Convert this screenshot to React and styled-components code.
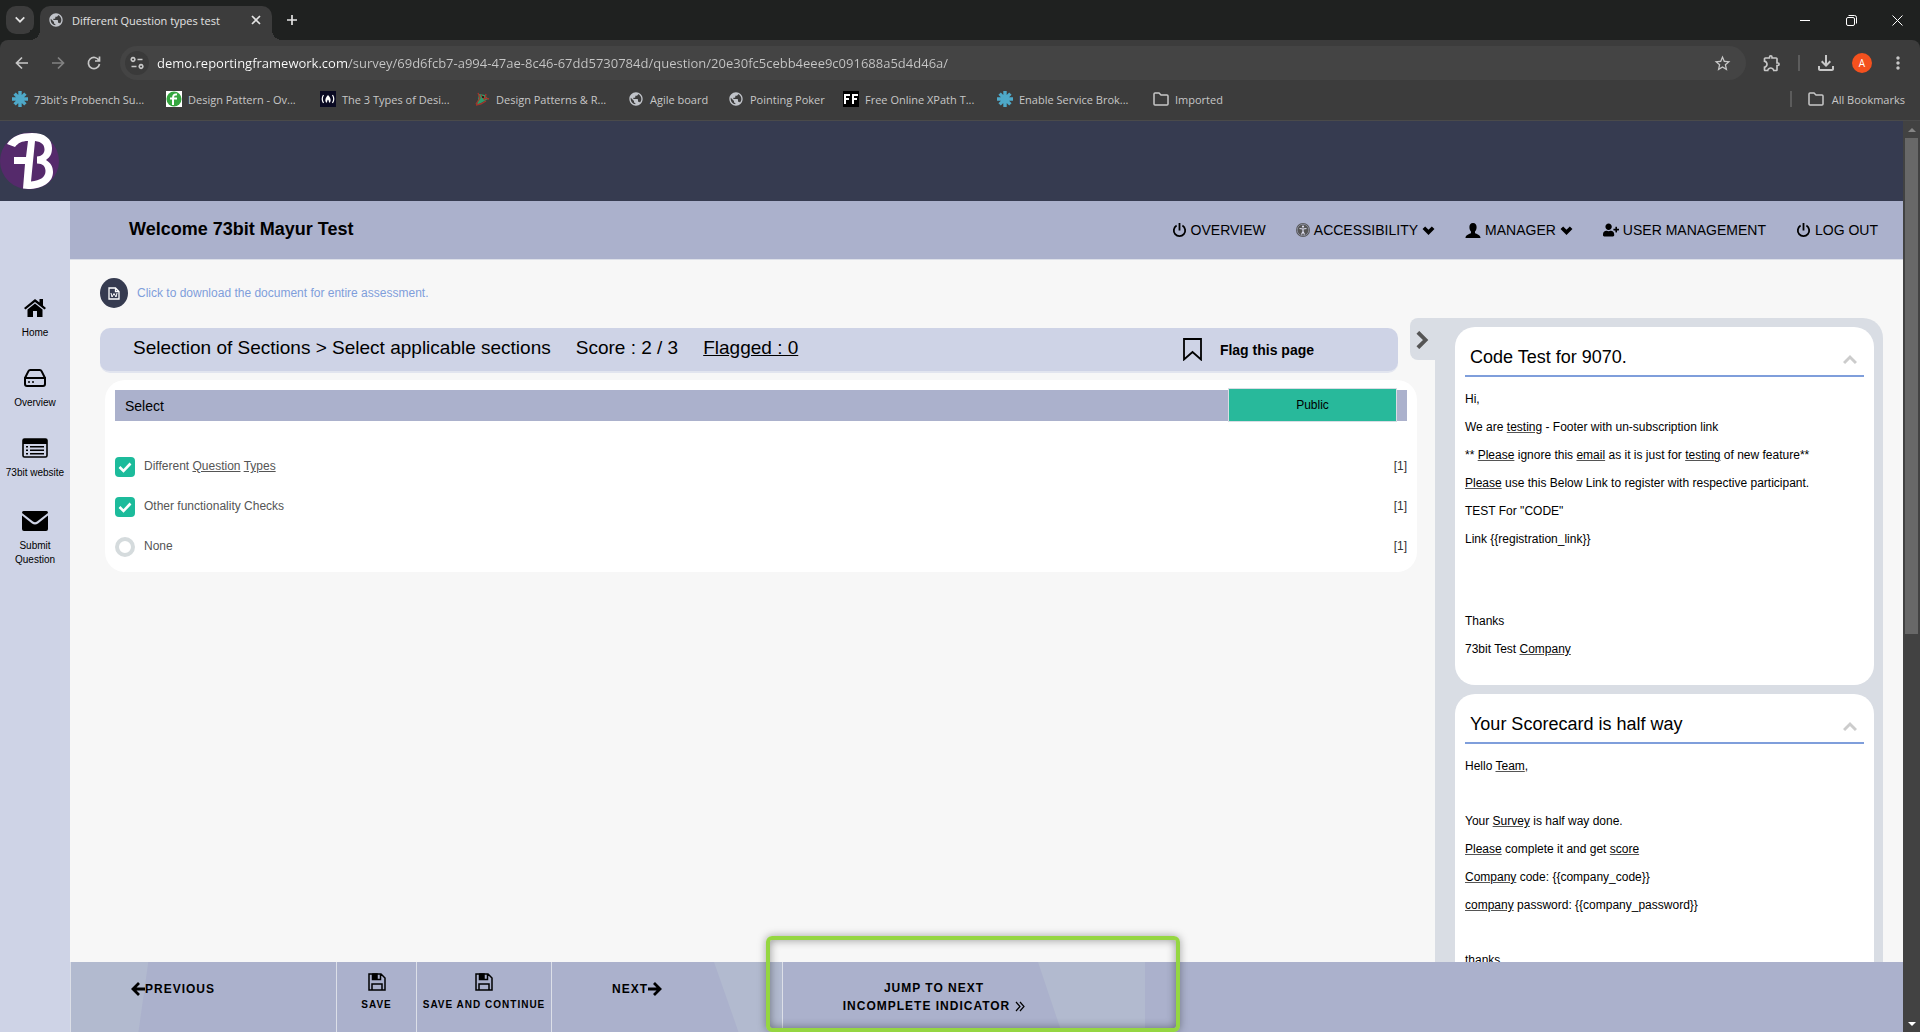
import React, { useState } from 'react'
import styled, { createGlobalStyle, css } from 'styled-components'
import { FaUserPlus } from 'react-icons/fa'
import { FiHardDrive } from 'react-icons/fi'
import { MdOutlineFileDownload, MdStarOutline, MdOutlineExtension, MdMoreVert, MdPublic } from 'react-icons/md'

const GlobalStyle = createGlobalStyle`
  * {
    box-sizing: border-box;
  }
  body {
    margin: 0;
    font-family: "Liberation Sans", Arial, sans-serif;
    font-size: 12px;
    color: #000;
    background: #f7f7f7;
  }
  button, input {
    font-family: inherit;
    color: inherit;
  }
  button {
    padding: 0;
    border: 0;
    background: none;
    cursor: pointer;
  }
  a {
    color: inherit;
    text-decoration: none;
  }
  svg {
    flex: none;
    display: block;
  }
`

const Window = styled.div`
  display: flex;
  flex-direction: column;
  height: 100vh;
  overflow: hidden;
`

/* browser */

const Browser = styled.div`
  flex: none;
  background: #1f2120;
  color: #e3e3e3;
  font-family: "Open Sans", "Noto Sans", sans-serif;
  font-size: 11px;
`

const TabStrip = styled.div`
  display: flex;
  align-items: flex-end;
  height: 40px;
  padding-left: 6px;
`

const TabSearch = styled.button`
  display: flex;
  align-items: center;
  justify-content: center;
  width: 28px;
  height: 28px;
  margin: 0 6px 6px 0;
  border-radius: 10px;
  background: #3c3c3c;
`

const Tab = styled.div`
  position: relative;
  display: flex;
  align-items: center;
  width: 232px;
  height: 34px;
  padding: 0 8px 6px 8px;
  border-radius: 10px 10px 0 0;
  background: #3c3c3c;
  &::before, &::after {
    content: '';
    position: absolute;
    bottom: 0;
    width: 10px;
    height: 10px;
  }
  &::before {
    left: -10px;
    background: radial-gradient(circle at 0 0, #1f2120 10px, #3c3c3c 10px);
  }
  &::after {
    right: -10px;
    background: radial-gradient(circle at 100% 0, #1f2120 10px, #3c3c3c 10px);
  }
`

const TabTitle = styled.span`
  flex: 1;
  margin-left: 8px;
`

const TabButton = styled.button`
  display: flex;
  align-items: center;
  justify-content: center;
  width: 16px;
  height: 16px;
`

const NewTab = styled(TabButton)`
  width: 28px;
  height: 28px;
  margin: 0 0 6px 6px;
`

const WindowControls = styled.div`
  display: flex;
  margin-left: auto;
`

const WindowButton = styled.button`
  display: flex;
  align-items: center;
  justify-content: center;
  width: 46px;
  height: 40px;
`

const Toolbar = styled.div`
  display: flex;
  align-items: center;
  height: 40px;
  padding: 6px 4px 0;
  border-radius: 8px 8px 0 0;
  background: #3c3c3c;
  color: #c7c7c7;
`

const ToolButton = styled.button`
  display: flex;
  align-items: center;
  justify-content: center;
  width: 36px;
  height: 34px;
  opacity: ${props => props.disabled ? 0.5 : 1};
`

const Omnibox = styled.div`
  flex: 1;
  display: flex;
  align-items: center;
  height: 34px;
  margin: 0 8px;
  padding: 0 6px 0 5px;
  border-radius: 17px;
  background: #444;
`

const SiteInfo = styled.button`
  display: flex;
  align-items: center;
  justify-content: center;
  width: 24px;
  height: 24px;
  border-radius: 50%;
  background: #3a3a3a;
`

/* the host part of the address is brighter than the path */
const Address = styled.input`
  flex: 1;
  min-width: 0;
  height: 24px;
  margin-left: 8px;
  padding: 0;
  border: 0;
  outline: 0;
  font-size: 13px;
  color: transparent;
  background: linear-gradient(90deg, #fff 192px, #c7c7c7 192px);
  background-clip: text;
  -webkit-background-clip: text;
`

const ToolDivider = styled.span`
  width: 2px;
  height: 16px;
  margin: 0 8px;
  background: #5c5c5c;
`

const Avatar = styled.span`
  display: flex;
  align-items: center;
  justify-content: center;
  width: 20px;
  height: 20px;
  border-radius: 50%;
  background: #f4511e;
  color: #fff;
  font-size: 10px;
`

const BookmarkBar = styled.nav`
  display: flex;
  align-items: center;
  height: 41px;
  padding: 0 15px 2px 12px;
  border-bottom: 1px solid #4a4a4a;
  background: #3c3c3c;
  color: #c7c7c7;
`

const Bookmark = styled.a`
  display: flex;
  align-items: center;
  gap: 6px;
  width: ${props => props.$width}px;
  white-space: nowrap;
`

const AllBookmarks = styled.a`
  display: flex;
  align-items: center;
  gap: 8px;
  margin-left: auto;
  &::before {
    content: '';
    width: 2px;
    height: 16px;
    margin-right: 8px;
    background: #5c5c5c;
  }
`

/* page */

const Viewport = styled.div`
  flex: 1;
  display: flex;
  min-height: 0;
`

const Page = styled.div`
  flex: 1;
  display: flex;
  flex-direction: column;
  min-width: 0;
`

const Scrollbar = styled.div`
  display: flex;
  flex-direction: column;
  align-items: center;
  width: 17px;
  background: #424242;
`

const ScrollArrow = styled.span`
  display: flex;
  align-items: center;
  justify-content: center;
  height: 17px;
  color: ${props => props.$dim ? '#858585' : '#fff'};
`

const ScrollThumb = styled.span`
  flex: 113;
  width: 13px;
  background: #686868;
`

const ScrollRest = styled.span`
  flex: 87;
`

const Banner = styled.header`
  flex: none;
  display: flex;
  align-items: center;
  height: 80px;
  background: #363b50;
`

const Body = styled.div`
  flex: 1;
  display: flex;
  min-height: 0;
`

const Sidebar = styled.nav`
  flex: none;
  display: flex;
  flex-direction: column;
  width: 70px;
  padding-top: 95px;
  background: #ced3e6;
`

const SideLink = styled.a`
  display: flex;
  flex-direction: column;
  align-items: center;
  gap: 6px;
  height: ${props => props.$tall ? 73 : 70}px;
  font-size: 10px;
  line-height: 14px;
  text-align: center;
`

const SideIcon = styled.span`
  display: flex;
  align-items: center;
  height: 24px;
`

const Main = styled.main`
  flex: 1;
  display: flex;
  flex-direction: column;
  min-width: 0;
`

const WelcomeBar = styled.div`
  flex: none;
  display: flex;
  align-items: center;
  justify-content: space-between;
  height: 59px;
  padding: 0 25px 0 59px;
  border-bottom: 1px solid #dcdfe8;
  background: #abb1cc;
`

const Welcome = styled.h1`
  margin: 0 0 3px;
  font-size: 18px;
  line-height: 22px;
`

const TopMenu = styled.nav`
  display: flex;
  gap: 30px;
  font-size: 14px;
`

const TopLink = styled.a`
  display: flex;
  align-items: center;
  gap: 4px;
`

const Content = styled.div`
  flex: 1;
  display: flex;
  align-items: flex-start;
  min-height: 0;
  overflow: hidden;
  padding: 0 20px 0 30px;
  background: #f7f7f7;
`

const Survey = styled.section`
  flex: 1;
  min-width: 0;
  padding-top: 18px;
`

const Download = styled.a`
  display: flex;
  align-items: center;
  gap: 9px;
  height: 30px;
  color: #7f9edb;
`

const DownloadBadge = styled.span`
  display: flex;
  align-items: center;
  justify-content: center;
  width: 28px;
  height: 30px;
  border-radius: 50%;
  background: #363b50;
`

const SectionBar = styled.div`
  display: flex;
  align-items: center;
  height: 45px;
  margin: 20px 19px 7px 0;
  padding: 0 84px 0 33px;
  border-bottom: 2px solid #e2e5ef;
  border-radius: 10px;
  background: #ced3e6;
  font-size: 19px;
`

const SectionTitle = styled.h2`
  margin: 0 25px 3px 0;
  font-size: 19px;
  font-weight: normal;
`

const SectionScore = styled.span`
  margin: 0 25px 3px 0;
`

const FlaggedLink = styled.a`
  margin-bottom: 3px;
  text-decoration: underline;
`

const FlagButton = styled.button`
  display: flex;
  align-items: center;
  gap: 18px;
  margin-left: auto;
  font-size: 14px;
  font-weight: bold;
`

const QuestionCard = styled.div`
  margin-left: 5px;
  padding: 10px 10px 5px;
  border-radius: 20px;
  background: #fff;
`

const QuestionBar = styled.div`
  display: flex;
  align-items: center;
  height: 31px;
  margin-bottom: 26px;
  padding: 0 10px;
  background: #abb1cc;
  font-size: 14px;
`

const PublicButton = styled.button`
  width: 169px;
  height: 34px;
  margin: 0 0 2px auto;
  border: 1px solid #d9dde4;
  background: #28b99b;
  font-size: 12px;
`

const Option = styled.div`
  display: flex;
  align-items: center;
  justify-content: space-between;
  height: 40px;
`

const OptionLabel = styled.label`
  display: grid;
  grid-template-columns: 20px auto;
  align-items: center;
  column-gap: 9px;
  color: #555;
  cursor: pointer;
  svg {
    grid-area: 1 / 1;
    justify-self: center;
    pointer-events: none;
  }
`

const Tick = styled.input`
  appearance: none;
  grid-area: 1 / 1;
  width: 20px;
  height: 20px;
  margin: 0;
  border: 4px solid #d5dbdd;
  border-radius: 50%;
  ${props => props.checked && css`
    border: 0;
    border-radius: 4px;
    background: #1cbb9b;
  `}
`

const OptionText = styled.span`
  padding-bottom: 2px;
`

const OptionScore = styled(OptionText)`
  color: #333;
`

const Term = styled.u`
  text-decoration-color: #555;
`

const InfoPanel = styled.aside`
  flex: none;
  display: flex;
  align-items: flex-start;
  margin: 58px 0 0 -7px;
`

const PanelToggle = styled.button`
  display: flex;
  align-items: center;
  justify-content: center;
  width: 25px;
  height: 42px;
  padding-top: 2px;
  border-radius: 8px 0 0 8px;
  background: #d9dde4;
  color: #555;
`

const PanelBody = styled.div`
  display: flex;
  flex-direction: column;
  gap: 9px;
  width: 448px;
  padding: 9px 9px 9px 20px;
  border-radius: 0 20px 0 0;
  background: #d9dde4;
`

const Note = styled.article`
  padding: 0 10px 17px;
  border-radius: 20px;
  background: #fff;
`

const NoteHeader = styled.header`
  display: flex;
  align-items: center;
  justify-content: space-between;
  height: 50px;
  margin-bottom: 13px;
  padding: 12px 7px 0 5px;
  border-bottom: 2px solid #7f9edb;
`

const NoteTitle = styled.h3`
  margin: 0;
  font-size: 18px;
  font-weight: normal;
`

const NoteToggle = styled.button`
  margin-top: 5px;
  color: #ccc;
`

const NoteLine = styled.p`
  height: ${props => props.$blank ? 17 : 18}px;
  margin: 0 0 10px;
  line-height: 18px;
`

/* footer */

const Footer = styled.footer`
  flex: none;
  display: flex;
  height: 70px;
  border-left: 1px solid #dcdfe8;
  background: #abb1cc;
`

const FooterButton = styled.button`
  position: relative;
  display: flex;
  align-items: center;
  justify-content: center;
  width: ${props => props.$width}px;
  padding-bottom: 16px;
  border-right: 1px solid #dcdfe8;
  font-size: 12px;
  font-weight: bold;
  line-height: 18px;
  letter-spacing: 1px;
`

const SaveButton = styled(FooterButton)`
  flex-direction: column;
  gap: 5px;
  padding-bottom: 8px;
  font-size: 10px;
`

const PreviousButton = styled(FooterButton)`
  justify-content: flex-start;
  padding-left: 60px;
  background: linear-gradient(98deg, #b2bacf 76px, transparent 77px);
`

const NextButton = styled(FooterButton)`
  justify-content: flex-start;
  padding-left: 60px;
  &::after {
    content: '';
    position: absolute;
    inset: 0 0 0 auto;
    width: 68px;
    background: #b2bacf;
    clip-path: polygon(0 0, 100% 0, 100% 100%, 36% 100%);
  }
`

const JumpButton = styled(FooterButton)`
  padding: 0 60px 0 0;
  border: 0;
  &::before {
    content: '';
    position: absolute;
    inset: 0 0 0 auto;
    width: 107px;
    background: #b2bacf;
    clip-path: polygon(0 0, 100% 0, 100% 100%, 22% 100%);
  }
  &::after {
    content: '';
    position: absolute;
    inset: -26px -35px 0 -17px;
    border: 4px solid #95d641;
    border-radius: 6px;
    box-shadow: 0 0 8px rgba(0, 0, 0, 0.35), inset 0 0 10px rgba(0, 0, 0, 0.4);
  }
`

const JumpLine = styled.span`
  display: flex;
  align-items: center;
  justify-content: center;
  gap: 5px;
`

/* icons */

const Chevron = ({ size = 13, width = 4, d = 'M2 4l5 5 5-5' }) => (
  <svg width={size} height={size} viewBox="0 0 14 14" fill="none" stroke="currentColor" strokeWidth={width}>
    <path d={d}/>
  </svg>
)

const Logo = () => (
  <svg width="59" height="58" viewBox="0 0 59 58" aria-label="73bit">
    <ellipse cx="29.5" cy="29" rx="29.5" ry="28.5" fill="#552a6b"/>
    <path d="M7 12C12 4 21 1 32 1c13 0 20 6 20 15 0 6-2 9-6 12 5 3 7 7 7 12 0 10-10 17-25 17l-5-.5L25 32H14v-7h12l2-16c-6 0-10 2-13 6z" fill="#fff"/>
    <path d="M35 9c7 1 9.500 4 9.500 8.500 0 4-3 7-7.500 7v7c6 0 8.500 3 8.500 7.500 0 6-5 9.500-14.500 10.500z" fill="#552a6b"/>
  </svg>
)

const HomeIcon = () => (
  <svg width="22" height="20" viewBox="0 0 22 20">
    <path d="M11 1L0 10l1.500 1.500L11 4l9.500 7.500L22 10l-3-2.500V1h-3.500v3.500z"/>
    <path d="M11 5.500l-7.500 6V19h5.500v-6h4v6h5.500v-7.500z"/>
  </svg>
)

const ListIcon = () => (
  <svg width="26" height="20" viewBox="0 0 26 20">
    <rect x="1" y="1" width="24" height="18" rx="1.500" fill="none" stroke="#000" strokeWidth="1.600"/>
    <path d="M1 1h24v5H1zM4 8h2v1.600H4zM8 8h14v1.600H8zM4 11.500h2v1.600H4zM8 11.500h14v1.600H8zM4 15h2v1.600H4zM8 15h14v1.600H8z"/>
  </svg>
)

const MailIcon = () => (
  <svg width="26" height="20" viewBox="0 0 26 20">
    <path d="M1.500 0h23Q26 0 26 2L15 10.500q-2 1.500-4 0L0 2Q0 0 1.500 0z"/>
    <path d="M0 4.500l10 8q3 2.200 6 0l10-8V18q0 2-2 2H2q-2 0-2-2z"/>
  </svg>
)

const PowerIcon = () => (
  <svg width="15" height="15" viewBox="0 0 15 15" fill="none" stroke="#000" strokeWidth="1.800">
    <path d="M4.600 2.600a5.700 5.700 0 1 0 5.800 0M7.500 0v7.500"/>
  </svg>
)

const AccessIcon = () => (
  <svg width="14" height="14" viewBox="0 0 14 14">
    <circle cx="7" cy="7" r="7" fill="#555"/>
    <circle cx="7" cy="7" r="5.800" fill="none" stroke="#999eb3" strokeWidth=".7"/>
    <circle cx="7" cy="3.600" r="1.100" fill="#dde"/>
    <path d="M3.500 5.500L7 6l3.500-.5M7 6v2.500L5.500 11.500M7 8.500l1.500 3" fill="none" stroke="#dde" strokeWidth="1.200"/>
  </svg>
)

const UserIcon = () => (
  <svg width="16" height="15" viewBox="0 0 16 15">
    <path d="M8 0c2.500 0 3.600 1.800 3.600 4 0 2-.7 3.600-1.600 4.500v1.700c2.500 1 5.500 1.800 5.500 4.800H.5c0-3 3-3.800 5.500-4.800V8.500C5.100 7.600 4.400 6 4.400 4c0-2.200 1.100-4 3.600-4z"/>
  </svg>
)

const SaveIcon = () => (
  <svg width="18" height="18" viewBox="0 0 18 18" fill="none" stroke="#000" strokeWidth="1.500">
    <path d="M1 1h12l4 4v12H1zM4 17v-6h10v6M4.500 1v5.500h8V1"/>
    <path d="M5 1h4v5H5z" fill="#000"/>
  </svg>
)

const WordIcon = () => (
  <svg width="12" height="13" viewBox="0 0 12 13" fill="none" stroke="#fff" strokeWidth="1.300">
    <path d="M1 1h6.500L11 4.500V12H1zM7.500 1v3.500H11"/>
    <path d="M3 6l1 4 2-3.500L8 10l1-4" strokeWidth="1"/>
  </svg>
)

const BookmarkIcon = () => (
  <svg width="19" height="23" viewBox="0 0 19 23" fill="none" stroke="#000" strokeWidth="1.800">
    <path d="M1 1h17v20.500l-8.500-7.500L1 21.500z"/>
  </svg>
)

const TickIcon = () => (
  <svg width="14" height="12" viewBox="0 0 14 12" fill="none" stroke="#fff" strokeWidth="2.600">
    <path d="M1.500 6l4 4L12.500 2.500"/>
  </svg>
)

const BoldArrow = ({ d }) => (
  <svg width="14" height="14" viewBox="0 0 14 14" fill="none" stroke="#000" strokeWidth="2.800">
    <path d={d}/>
  </svg>
)

const DoubleAngle = () => (
  <svg width="10" height="11" viewBox="0 0 10 11" fill="none" stroke="#000" strokeWidth="1.200">
    <path d="M1 1l4 4.500L1 10M5 1l4 4.500L5 10"/>
  </svg>
)

const ArrowIcon = ({ d }) => (
  <svg width="16" height="16" viewBox="0 0 16 16" fill="none" stroke="currentColor" strokeWidth="1.700">
    <path d={d}/>
  </svg>
)

const FlowerIcon = () => (
  <svg width="16" height="16" viewBox="0 0 16 16" stroke="#4ea9c9" strokeWidth="3.400">
    <path d="M8 0v16M0 8h16M2.600 2.600l10.800 10.800M13.400 2.600L2.600 13.400"/>
  </svg>
)

const LeafIcon = () => (
  <svg width="16" height="16" viewBox="0 0 16 16">
    <rect width="16" height="16" fill="#fff"/>
    <circle cx="8" cy="8" r="7.500" fill="#35a63f"/>
    <path d="M11 3.500c-3-.5-4 1-4 4V14M4 7.500h7" stroke="#fff" strokeWidth="2" fill="none"/>
  </svg>
)

const FreeCodeIcon = () => (
  <svg width="16" height="16" viewBox="0 0 16 16" fill="none" stroke="#fff" strokeWidth="1.200">
    <rect width="16" height="16" fill="#0a0a23" stroke="none"/>
    <path d="M3.500 4Q1 8 3.500 12M12.500 4Q15 8 12.500 12"/>
    <path d="M8 4q4 4 2 7.500H9q0-2-1-3-1 1-1 3H6Q4 8 8 4z" fill="#fff" stroke="none"/>
  </svg>
)

const BugIcon = () => (
  <svg width="16" height="16" viewBox="0 0 16 16" fill="none">
    <path d="M5 3l6 1 3 4-7 4-4 2z" fill="#2d9a6a"/>
    <path d="M4 2l2 5-4 6M7 4l4 5M12 3l-1 4 4 1M2 14l5-1 5-3" stroke="#a5352a" strokeWidth="1.300"/>
    <circle cx="9" cy="6" r="1" fill="#111"/>
  </svg>
)

const FoxIcon = () => (
  <svg width="16" height="16" viewBox="0 0 16 16" stroke="#fff" strokeWidth="2" fill="none">
    <rect width="16" height="16" fill="#000" stroke="none"/>
    <path d="M2 13V4h5M2 8h4M10 13V4h5M10 8h4"/>
  </svg>
)

const FolderIcon = () => (
  <svg width="16" height="14" viewBox="0 0 16 14" fill="none" stroke="currentColor" strokeWidth="1.500">
    <path d="M1 12V2q0-1 1-1h4l2 2h6q1 0 1 1v8q0 1-1 1H2q-1 0-1-1z"/>
  </svg>
)

const GlobeIcon = () => <MdPublic size={16} color="#c1c4ca"/>

const bookmarks = [
  { label: "73bit's Probench Su...", icon: FlowerIcon, width: 154 },
  { label: 'Design Pattern - Ov...', icon: LeafIcon, width: 154 },
  { label: 'The 3 Types of Desi...', icon: FreeCodeIcon, width: 154 },
  { label: 'Design Patterns & R...', icon: BugIcon, width: 154 },
  { label: 'Agile board', icon: GlobeIcon, width: 100 },
  { label: 'Pointing Poker', icon: GlobeIcon, width: 115 },
  { label: 'Free Online XPath T...', icon: FoxIcon, width: 154 },
  { label: 'Enable Service Brok...', icon: FlowerIcon, width: 156 },
  { label: 'Imported', icon: FolderIcon, width: 80 }
]

const notes = [
  {
    title: 'Code Test for 9070.',
    lines: [
      'Hi,',
      'We are _testing_ - Footer with un-subscription link',
      '** _Please_ ignore this _email_ as it is just for _testing_ of new feature**',
      '_Please_ use this Below Link to register with respective participant.',
      'TEST For "CODE"',
      ['Link {{registration_link}}'],
      '',
      '',
      'Thanks',
      '73bit Test _Company_'
    ]
  },
  {
    title: 'Your Scorecard is half way',
    lines: [
      'Hello _Team_,',
      '',
      'Your _Survey_ is half way done.',
      '_Please_ complete it and get _score_',
      ['', 'Company', ' code: {{company_code}}'],
      ['', 'company', ' password: {{company_password}}'],
      '',
      'thanks'
    ]
  }
]

const Terms = ({ text }) => {
  const parts = Array.isArray(text) ? text : text.split('_')
  return parts.map((part, i) => i % 2 ? <Term key={i}>{part}</Term> : part)
}

const BrowserChrome = () => {
  const [url, setUrl] = useState('demo.reportingframework.com/survey/69d6fcb7-a994-47ae-8c46-67dd5730784d/question/20e30fc5cebb4eee9c091688a5d4d46a/')
  return (
    <Browser>
      <TabStrip>
        <TabSearch aria-label="Search tabs"><Chevron size={12} width={2}/></TabSearch>
        <Tab>
          <GlobeIcon/>
          <TabTitle>Different Question types test</TabTitle>
          <TabButton aria-label="Close tab"><ArrowIcon d="M4 4l8 8M12 4l-8 8"/></TabButton>
        </Tab>
        <NewTab aria-label="New tab"><ArrowIcon d="M8 3v10M3 8h10"/></NewTab>
        <WindowControls>
          <WindowButton aria-label="Minimize">
            <svg width="10" height="10" stroke="#fff"><path d="M0 5.500h10"/></svg>
          </WindowButton>
          <WindowButton aria-label="Restore">
            <svg width="11" height="11" stroke="#fff" fill="none">
              <rect x=".5" y="2.500" width="8" height="8" rx="1.500"/>
              <path d="M2.500 .5h6q2 0 2 2v6"/>
            </svg>
          </WindowButton>
          <WindowButton aria-label="Close">
            <svg width="11" height="11" stroke="#fff"><path d="M.5 .5l10 10M10.500 .5l-10 10"/></svg>
          </WindowButton>
        </WindowControls>
      </TabStrip>
      <Toolbar>
        <ToolButton aria-label="Back"><ArrowIcon d="M14 8H3M8 2.500L2.500 8 8 13.500"/></ToolButton>
        <ToolButton aria-label="Forward" disabled><ArrowIcon d="M2 8h11M8 2.500L13.500 8 8 13.500"/></ToolButton>
        <ToolButton aria-label="Reload"><ArrowIcon d="M13 5.500A5.600 5.600 0 1 0 13.500 9M13.500 1.500v4.500H9"/></ToolButton>
        <Omnibox>
          <SiteInfo aria-label="Site information">
            <ArrowIcon d="M8.500 4.500h5M2.500 11.500h5M4 2.700a1.800 1.800 0 1 0 .1 0zM12 9.700a1.800 1.800 0 1 0 .1 0z"/>
          </SiteInfo>
          <Address aria-label="Address" value={url} onChange={e => setUrl(e.target.value)}/>
          <ToolButton aria-label="Bookmark this tab"><MdStarOutline size={19}/></ToolButton>
        </Omnibox>
        <ToolButton aria-label="Extensions"><MdOutlineExtension size={20}/></ToolButton>
        <ToolDivider/>
        <ToolButton aria-label="Downloads"><MdOutlineFileDownload size={24}/></ToolButton>
        <ToolButton aria-label="Profile"><Avatar>A</Avatar></ToolButton>
        <ToolButton aria-label="Menu"><MdMoreVert size={20}/></ToolButton>
      </Toolbar>
      <BookmarkBar>
        {bookmarks.map(({ label, icon: Icon, width }) => (
          <Bookmark href="#" key={label} $width={width}><Icon/>{label}</Bookmark>
        ))}
        <AllBookmarks href="#"><FolderIcon/>All Bookmarks</AllBookmarks>
      </BookmarkBar>
    </Browser>
  )
}

const Options = () => {
  const [options, setOptions] = useState([
    { text: 'Different _Question_ _Types_', checked: true },
    { text: 'Other functionality Checks', checked: true },
    { text: 'None', checked: false }
  ])
  const toggle = index => setOptions(options.map((o, i) => i === index ? { ...o, checked: !o.checked } : o))
  return options.map((option, i) => (
    <Option key={option.text}>
      <OptionLabel>
        <Tick type="checkbox" checked={option.checked} onChange={() => toggle(i)}/>
        {option.checked && <TickIcon/>}
        <OptionText><Terms text={option.text}/></OptionText>
      </OptionLabel>
      <OptionScore>[1]</OptionScore>
    </Option>
  ))
}

const App = () => (
  <Window>
    <GlobalStyle/>
    <BrowserChrome/>
    <Viewport>
      <Page>
        <Banner><Logo/></Banner>
        <Body>
          <Sidebar>
            <SideLink href="#"><SideIcon><HomeIcon/></SideIcon>Home</SideLink>
            <SideLink href="#"><SideIcon><FiHardDrive size={24}/></SideIcon>Overview</SideLink>
            <SideLink href="#" $tall><SideIcon><ListIcon/></SideIcon>73bit website</SideLink>
            <SideLink href="#" $tall><SideIcon><MailIcon/></SideIcon>Submit<br/>Question</SideLink>
          </Sidebar>
          <Main>
            <WelcomeBar>
              <Welcome>Welcome 73bit Mayur Test</Welcome>
              <TopMenu>
                <TopLink href="#"><PowerIcon/>OVERVIEW</TopLink>
                <TopLink href="#"><AccessIcon/>ACCESSIBILITY<Chevron/></TopLink>
                <TopLink href="#"><UserIcon/>MANAGER<Chevron/></TopLink>
                <TopLink href="#"><FaUserPlus size={16}/>USER MANAGEMENT</TopLink>
                <TopLink href="#"><PowerIcon/>LOG OUT</TopLink>
              </TopMenu>
            </WelcomeBar>
            <Content>
              <Survey>
                <Download href="#">
                  <DownloadBadge><WordIcon/></DownloadBadge>
                  Click to download the document for entire assessment.
                </Download>
                <SectionBar>
                  <SectionTitle>Selection of Sections &gt; Select applicable sections</SectionTitle>
                  <SectionScore>Score : 2 / 3</SectionScore>
                  <FlaggedLink href="#">Flagged : 0</FlaggedLink>
                  <FlagButton><BookmarkIcon/>Flag this page</FlagButton>
                </SectionBar>
                <QuestionCard>
                  <QuestionBar>Select<PublicButton>Public</PublicButton></QuestionBar>
                  <Options/>
                </QuestionCard>
              </Survey>
              <InfoPanel>
                <PanelToggle aria-label="Collapse panel"><Chevron size={18} width={3} d="M3 1l6 6-6 6"/></PanelToggle>
                <PanelBody>
                  {notes.map(note => (
                    <Note key={note.title}>
                      <NoteHeader>
                        <NoteTitle>{note.title}</NoteTitle>
                        <NoteToggle aria-label="Collapse"><Chevron size={14} width={3} d="M1 10l6-6 6 6"/></NoteToggle>
                      </NoteHeader>
                      {note.lines.map((line, i) => (
                        <NoteLine key={i} $blank={!line}><Terms text={line}/></NoteLine>
                      ))}
                    </Note>
                  ))}
                </PanelBody>
              </InfoPanel>
            </Content>
            <Footer>
              <PreviousButton $width={266}><BoldArrow d="M14 7H3M8 1L2 7l6 6"/>PREVIOUS</PreviousButton>
              <SaveButton $width={80}><SaveIcon/>SAVE</SaveButton>
              <SaveButton $width={135}><SaveIcon/>SAVE AND CONTINUE</SaveButton>
              <NextButton $width={231}>NEXT<BoldArrow d="M0 7h11M6 1l6 6-6 6"/></NextButton>
              <JumpButton $width={362}>
                <span>
                  <JumpLine>JUMP TO NEXT</JumpLine>
                  <JumpLine>INCOMPLETE INDICATOR<DoubleAngle/></JumpLine>
                </span>
              </JumpButton>
            </Footer>
          </Main>
        </Body>
      </Page>
      <Scrollbar>
        <ScrollArrow $dim><svg width="8" height="4" fill="currentColor"><path d="M0 4l4-4 4 4z"/></svg></ScrollArrow>
        <ScrollThumb/>
        <ScrollRest/>
        <ScrollArrow><svg width="8" height="4" fill="currentColor"><path d="M0 0l4 4 4-4z"/></svg></ScrollArrow>
      </Scrollbar>
    </Viewport>
  </Window>
)

export default App
